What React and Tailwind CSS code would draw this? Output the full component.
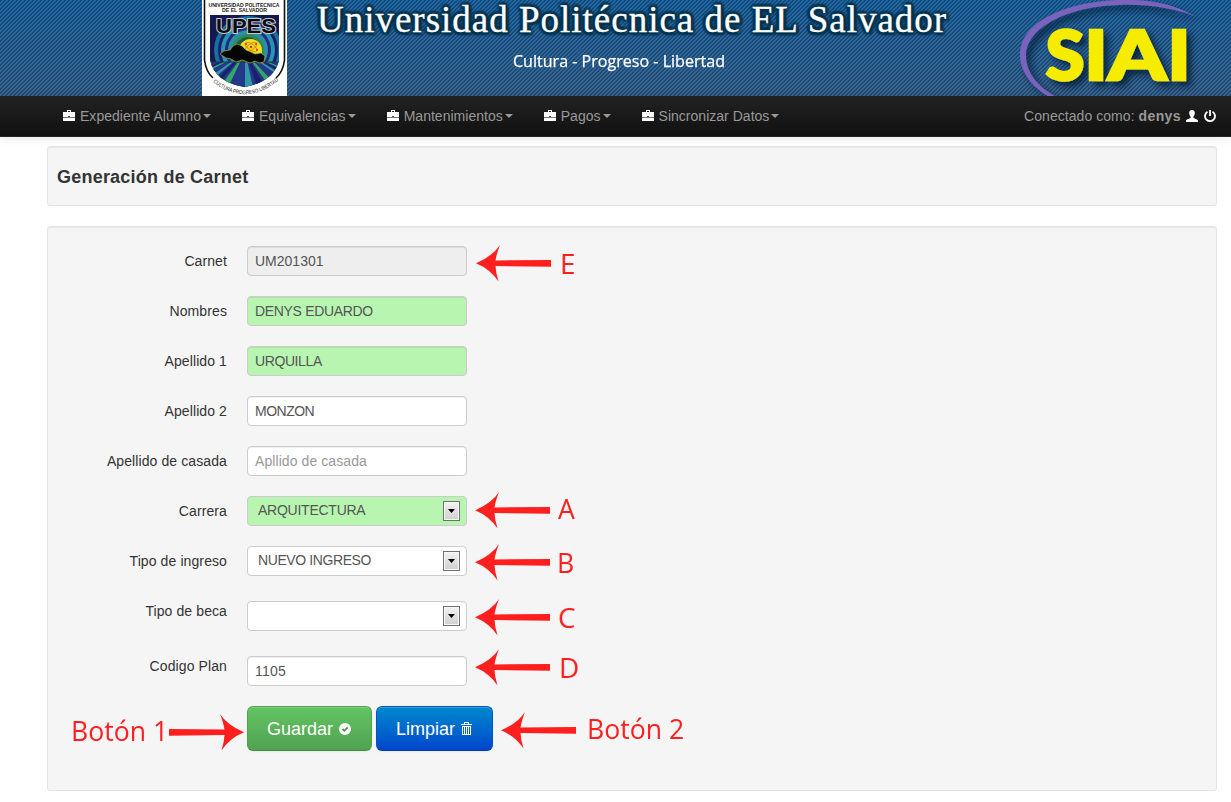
import React from "react";

const NAV = ["Expediente Alumno", "Equivalencias", "Mantenimientos", "Pagos", "Sincronizar Datos"];

function Briefcase() {
  return (
    <svg width="12" height="11" viewBox="0 0 12 11" className="mr-[5px] shrink-0 -translate-y-px" shapeRendering="crispEdges">
      <path fill="#fff" d="M0 2h4V0h4v2h4v5H0zM5 1v1h2V1zM0 8h12v3H0z" fillRule="evenodd" />
      <path fill="#777" d="M0 7h12v1H0z" />
      <path fill="#555" d="M5 6h2v1H5z" />
    </svg>
  );
}

function Shield() {
  const rays = [];
  for (let i = 0; i < 14; i++) {
    const colors = ["#1b1f6e", "#35a56b", "#253a8c", "#3596a8"];
    const x1 = -76 + i * 17;
    rays.push(<path key={i} d={`M43 52L${x1} 100H${x1 + 11}Z`} fill={colors[i % 4]} />);
  }
  return (
    <svg width="85" height="96" viewBox="0 0 85 96" className="shrink-0">
      <defs>
        <clipPath id="inner"><path d="M8 15H77V60Q72 82 42 87Q13 82 8 60Z" /></clipPath>
        <clipPath id="ground"><path d="M5 62H80V95H5Z" /></clipPath>
        <path id="motto" d="M11 82Q43 107 76 81" />
      </defs>
      <path d="M0 0H85V96H0Z" fill="#fff" />
      <path d="M2.500 0V60Q4 72 11 78M82.500 0V60Q81 72 74 78" fill="none" stroke="#111" strokeWidth="1.600" />
      <g clipPath="url(#inner)">
        <rect x="5" y="14" width="75" height="76" fill="#14184f" />
        <circle cx="46" cy="50" r="34" fill="#176fa0" />
        <circle cx="46" cy="50" r="30" fill="#1c1f68" />
        <circle cx="46" cy="50" r="27" fill="#2793b5" />
        <circle cx="46" cy="50" r="23" fill="#1f2f7c" />
        <circle cx="46" cy="50" r="20" fill="#2b8fa8" />
        <circle cx="46" cy="50" r="16" fill="#2d8b58" />
        <circle cx="46" cy="50" r="13" fill="#1d5b44" />
        <rect x="5" y="62" width="75" height="30" fill="#203a86" />
        <g clipPath="url(#ground)">{rays}</g>
        <path d="M5 62H80" stroke="#173a4a" strokeWidth="1" />
      </g>
      <circle cx="48.500" cy="50.500" r="11.500" fill="#f3df1f" />
      <g fill="none" stroke="#d67a16" strokeWidth=".8">
        <ellipse cx="49" cy="47" rx="7" ry="3" transform="rotate(35 49 47)" />
        <ellipse cx="49" cy="47" rx="7" ry="3" transform="rotate(-35 49 47)" />
      </g>
      <g fill="#d5301b"><circle cx="49" cy="47" r="1.300" /><circle cx="44" cy="44" r="1" /><circle cx="54" cy="44" r="1" /><circle cx="43" cy="50" r="1" /><circle cx="55" cy="50" r="1" /></g>
      <path d="M18 54L22 51L28 50L31 46L35 44L40 46L44 50L49 52L53 54L59 53L63 56L62 62L57 63L53 61L48 63L40 60L34 62L29 59L24 58Z" fill="#050505" stroke="#b2a934" strokeWidth=".7" />
      <g fontFamily="Liberation Sans, sans-serif" fontWeight="700" fill="#222">
        <text x="6.500" y="6.500" fontSize="5.600" textLength="71" lengthAdjust="spacingAndGlyphs">UNIVERSIDAD POLITECNICA</text>
        <text x="20" y="11.500" fontSize="5.600" textLength="45" lengthAdjust="spacingAndGlyphs">DE EL SALVADOR</text>
        <text x="14" y="32.500" fontSize="20" textLength="60" lengthAdjust="spacingAndGlyphs" fill="#0b0b14" stroke="#c9c9c9" strokeWidth="2" paintOrder="stroke">UPES</text>
        <text fontSize="5.500" fontWeight="400"><textPath href="#motto" textLength="72" lengthAdjust="spacingAndGlyphs">CULTURA PROGRESO LIBERTAD</textPath></text>
      </g>
    </svg>
  );
}

function Siai() {
  return (
    <svg width="200" height="96" viewBox="0 0 200 96" className="shrink-0">
      <defs>
        <filter id="sh" x="-20%" y="-20%" width="150%" height="150%">
          <feDropShadow dx="5" dy="5" stdDeviation="3.500" floodColor="#041c33" floodOpacity=".8" />
        </filter>
      </defs>
      <path filter="url(#sh)" fill="#7a62bd" d="M175 16C150 2 122 -1 98 0C45 2 0 22 0 55C0 73 14 89 30 97L37 97C19 88 6 73 6 56C6 27 49 6 100 5C130 4 155 9 175 16Z" />
      <text filter="url(#sh)" y="80" fontFamily="Lato, sans-serif" fontWeight="900" fontSize="68" fill="#f5ec00" stroke="#f5ec00" strokeWidth="2.500">
        <tspan x="25.500" textLength="39" lengthAdjust="spacingAndGlyphs">S</tspan>
        <tspan x="64.500" textLength="23" lengthAdjust="spacingAndGlyphs">I</tspan>
        <tspan x="88" textLength="58.500" lengthAdjust="spacingAndGlyphs">A</tspan>
        <tspan x="147.500" textLength="23" lengthAdjust="spacingAndGlyphs">I</tspan>
      </text>
    </svg>
  );
}

function Arrow({ className }) {
  return (
    <svg width="75" height="37" viewBox="0 0 75 37" className={"absolute " + className}>
      <path fill="#ff1f1f" d="M0 18.300Q17 11 24 0Q20.500 9 19.500 15.400L75 15V21.700L19.500 21Q19.800 28 22.500 36.500Q14 24 0 18.300Z" />
    </svg>
  );
}

function Note({ className, children }) {
  return (
    <span className={"absolute origin-left whitespace-nowrap font-['Open_Sans',sans-serif] text-[28px] leading-[30px] text-[#ff1f1f] " + className}>
      {children}
    </span>
  );
}

function Row({ label, value, look = "bg-white", select, placeholder, low, track = "" }) {
  return (
    <div className={"mb-5 flex " + (low ? "h-[35px]" : "h-[30px]")}>
      <div className="w-[179px] pt-[5px] text-right leading-5 tracking-[0.1px] text-[#333]">{label}</div>
      <div className={"ml-5 flex h-[30px] w-[220px] items-center rounded-[4px] border border-[#ccc] pr-[6px] " + look + (low ? " mt-[5px]" : "") + (select ? " pl-[10px]" : " pl-[7px] shadow-[inset_0_1px_1px_rgba(0,0,0,0.075)]")}>
        <span className={"flex-1 leading-5 " + track + (placeholder ? " text-[#999]" : " text-[#555]") + (select ? " -mt-[2px]" : "")}>{value}</span>
        {select && (
          <span className="flex h-5 w-[17px] items-center justify-center border border-[#707070] bg-gradient-to-b from-[#f3f3f3] to-[#cfcfcf] shadow-[inset_0_0_0_1px_#f8f8f8]">
            <svg width="7" height="4" viewBox="0 0 7 4"><path d="M0 0H7L3.500 4Z" /></svg>
          </span>
        )}
      </div>
    </div>
  );
}

export default function App() {
  return (
    <div className="relative h-[802px] w-[1231px] bg-white font-['Liberation_Sans',Arial,sans-serif] text-[14px] leading-5">
      <header className="flex h-24 bg-[linear-gradient(135deg,rgba(18,34,80,0.45)_0%,rgba(18,34,80,0.45)_25%,transparent_25%,transparent_50%,rgba(18,34,80,0.45)_50%,rgba(18,34,80,0.45)_75%,transparent_75%),linear-gradient(#1c69a2,#38688f)] bg-[length:4px_4px,100%_100%] pl-[202px]">
        <Shield />
        <div className="flex w-[733px] flex-col pl-[30px] text-white">
          <h1 className="h-[42px] whitespace-nowrap font-['Liberation_Serif',serif] text-[37px] leading-[40px] [-webkit-text-stroke:0.3px_white] [text-shadow:0_0_3px_#06344f,3px_0_2px_#06344f,-3px_0_2px_#06344f,0_3px_2px_#06344f,0_-3px_2px_#06344f,3px_3px_2px_#06344f,-2px_-2px_2px_#06344f,2px_-2px_2px_#06344f,-2px_2px_2px_#06344f]">
            <span className="tracking-[0.99px]">Universidad Politécnica de EL Salvador</span>
          </h1>
          <p className="ml-[196px] mt-[9px] whitespace-nowrap"><span className="inline-block origin-left scale-x-[0.945] font-['Open_Sans',sans-serif] text-[17px] [-webkit-text-stroke:0.25px_white]">Cultura - Progreso - Libertad</span></p>
        </div>
        <Siai />
      </header>
      <nav className="flex h-[41px] items-center justify-between border-b border-[#252525] bg-gradient-to-b from-[#222] to-[#111] pl-[63px] pr-[15px] text-[#999] shadow-[0_1px_10px_rgba(0,0,0,0.1)]">
        <ul className="flex gap-[31px]">
          {NAV.map((t) => (
            <li key={t} className="flex items-center">
              <Briefcase />
              <span className="tracking-[0.02px]">{t}</span>
              <svg width="8" height="4" viewBox="0 0 8 4" className="ml-[2px]"><path fill="#999" d="M0 0H8L4 4Z" /></svg>
            </li>
          ))}
        </ul>
        <div className="flex items-center">
          <span className="tracking-[0.05px]">Conectado como: <b className="tracking-[0.4px]">denys</b></span>
          <svg width="12" height="12" viewBox="0 0 12 12" className="ml-[5px]"><path fill="#fff" d="M6 0C8 0 9 1.500 8.800 3.500C8.600 5.500 7.500 6.200 7.300 7.500C7.300 8.500 12 9 12 11V12H0V11C0 9 4.700 8.500 4.700 7.500C4.500 6.200 3.400 5.500 3.200 3.500C3 1.500 4 0 6 0Z" /></svg>
          <svg width="12" height="12" viewBox="0 0 12 12" className="ml-[6px]" fill="none" stroke="#fff" strokeWidth="1.800"><path d="M3.500 1.800A5 5 0 1 0 8.500 1.800M6 0V6" /></svg>
        </div>
      </nav>
      <main className="ml-[47px] mt-[9px] w-[1170px]">
        <section className="mb-5 h-[60px] rounded-[3px] border border-[#e3e3e3] bg-[#f5f5f5] px-[9px] pt-[10px] shadow-[inset_0_1px_1px_rgba(0,0,0,0.05)]">
          <h2 className="text-[18px] font-bold leading-10 tracking-[0.22px] text-[#333]">Generación de Carnet</h2>
        </section>
        <section className="h-[565px] rounded-[3px] border border-[#e3e3e3] bg-[#f5f5f5] pt-[19px] shadow-[inset_0_1px_1px_rgba(0,0,0,0.05)]">
          <Row label="Carnet" value="UM201301" look="bg-[#eee]" />
          <Row label="Nombres" value="DENYS EDUARDO" look="bg-[#b8f5b1]" track="tracking-[-0.33px]" />
          <Row label="Apellido 1" value="URQUILLA" look="bg-[#b8f5b1]" track="tracking-[-0.4px]" />
          <Row label="Apellido 2" value="MONZON" track="tracking-[-0.5px]" />
          <Row label="Apellido de casada" value="Apllido de casada" placeholder track="tracking-[0.08px]" />
          <Row label="Carrera" value="ARQUITECTURA" look="bg-[#b8f5b1]" select track="tracking-[-0.25px]" />
          <Row label="Tipo de ingreso" value="NUEVO INGRESO" select track="tracking-[-0.4px]" />
          <Row label="Tipo de beca" value="" select low />
          <Row label="Codigo Plan" value="1105" low track="tracking-[0.2px]" />
          <div className="ml-[199px] flex gap-1 text-[18px] text-white [text-shadow:0_-1px_0_rgba(0,0,0,0.25)]">
            <button className="flex h-[45px] w-[125px] items-center rounded-[6px] border border-[#51a351] border-b-[#438a43] bg-gradient-to-b from-[#62c462] to-[#51a351] pl-[19px] shadow-[inset_0_1px_0_rgba(255,255,255,0.2),0_1px_2px_rgba(0,0,0,0.05)]">
              Guardar
              <svg width="12" height="12" viewBox="0 0 12 12" className="ml-[6px] mt-px"><circle cx="6" cy="6" r="6" fill="#fff" /><path d="M3.500 6L5.300 7.800L8.700 4.300" stroke="#4b9a4b" strokeWidth="1.800" fill="none" /></svg>
            </button>
            <button className="flex h-[45px] w-[117px] items-center rounded-[6px] border border-[#0055c4] border-b-[#003aa8] bg-gradient-to-b from-[#0088cc] to-[#0044cc] pl-[19px] shadow-[inset_0_1px_0_rgba(255,255,255,0.2),0_1px_2px_rgba(0,0,0,0.05)]">
              Limpiar
              <svg width="11" height="13" viewBox="0 0 11 13" className="ml-[6px]" fill="none" stroke="#fff" shapeRendering="crispEdges"><path d="M0 2.500H11M3.500 2V.5H7.500V2M1.500 4V12.500H9.500V4M1 4.500H10M3.500 5V12M5.500 5V12M7.500 5V12" /></svg>
            </button>
          </div>
        </section>
      </main>
      <Arrow className="left-[476px] top-[245px]" />
      <Arrow className="left-[475px] top-[492px]" />
      <Arrow className="left-[475px] top-[544px]" />
      <Arrow className="left-[475px] top-[599px]" />
      <Arrow className="left-[475px] top-[649px]" />
      <Arrow className="left-[501px] top-[712px]" />
      <Arrow className="left-[169px] top-[714px] -scale-x-100" />
      <Note className="left-[560px] top-[248px]">E</Note>
      <Note className="left-[558px] top-[493px] scale-x-95">A</Note>
      <Note className="left-[557px] top-[547px] scale-x-95">B</Note>
      <Note className="left-[558px] top-[602px]">C</Note>
      <Note className="left-[559px] top-[652px]">D</Note>
      <Note className="left-[71px] top-[715px] scale-x-95">Botón 1</Note>
      <Note className="left-[587px] top-[713px] scale-x-95">Botón 2</Note>
    </div>
  );
}
